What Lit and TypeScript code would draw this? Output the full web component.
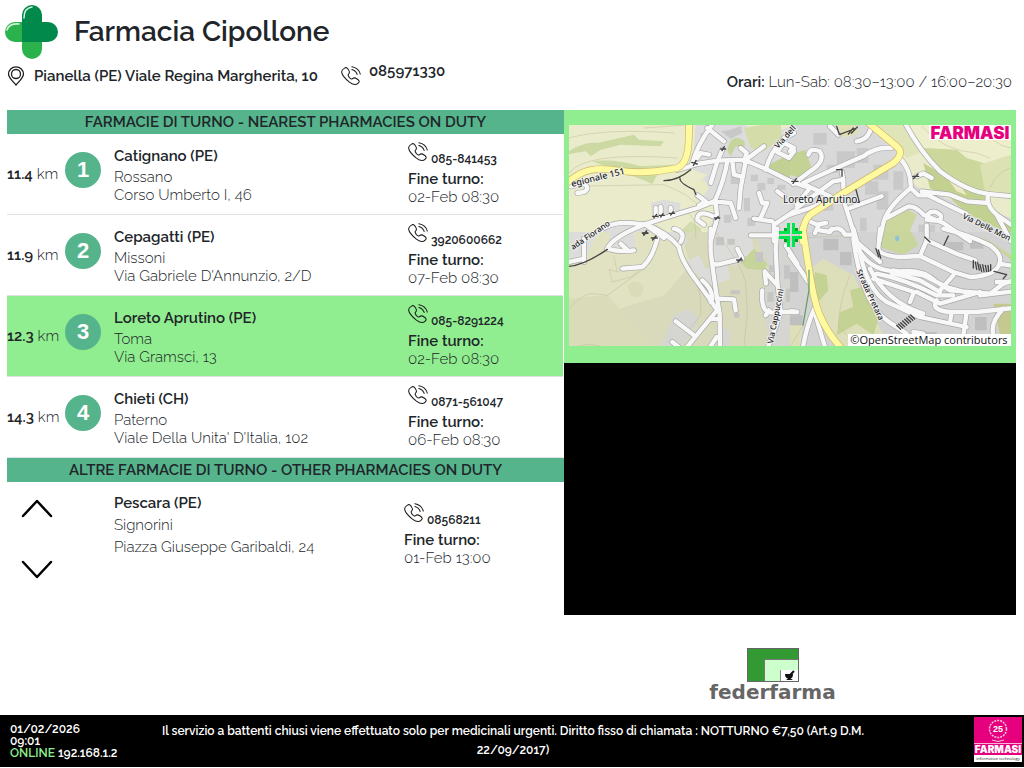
import { LitElement, html, svg, css } from "lit";
import { customElement, property } from "lit/decorators.js";
import { classMap } from "lit/directives/class-map.js";

interface Duty {
  km?: string;
  city: string;
  name: string;
  address: string;
  phone: string;
  until: string;
  selected?: boolean;
}

const NEAREST: Duty[] = [
  { km: "11.4", city: "Catignano (PE)", name: "Rossano", address: "Corso Umberto I, 46", phone: "085-841453", until: "02-Feb 08:30" },
  { km: "11.9", city: "Cepagatti (PE)", name: "Missoni", address: "Via Gabriele D'Annunzio, 2/D", phone: "3920600662", until: "07-Feb 08:30" },
  { km: "12.3", city: "Loreto Aprutino (PE)", name: "Toma", address: "Via Gramsci, 13", phone: "085-8291224", until: "02-Feb 08:30", selected: true },
  { km: "14.3", city: "Chieti (CH)", name: "Paterno", address: "Viale Della Unita' D'Italia, 102", phone: "0871-561047", until: "06-Feb 08:30" },
];

const OTHER: Duty = {
  city: "Pescara (PE)", name: "Signorini", address: "Piazza Giuseppe Garibaldi, 24", phone: "08568211", until: "01-Feb 13:00",
};

const phoneIcon = html`<svg class="phone-icon" viewBox="0 0 57 57" aria-hidden="true">
  <g fill="none" stroke="#1c1c1c" stroke-width="3" stroke-linecap="round" stroke-linejoin="round">
    <path d="M10 6C14 3 18 5 22 12C26 18 25 20 21 24C19 26 20 28 24 33C29 38 31 38 33 36C37 32 40 33 46 37C53 42 53 45 49 49C43 55 36 55 24 46C12 36 3 26 2 18C1 13 5 9 10 6Z"/>
    <path d="M31 2Q50 5 55 23"/><path d="M31 10Q43 13 46 24"/>
  </g></svg>`;

/* Map tiles: each is drawn on a grid three times finer than the map. */
interface Tile { at: string; fields: [string, string][]; roads: string; main: string; dark: string; tracks: string }

const TILES: Tile[] = [
  {
    at: "translate(564 108) scale(.333333)",
    fields: [
      ["#cdd9a3", "M15 130Q60 100 100 105L210 80L225 95L300 100L290 115L170 110L110 125L80 145L65 130L15 138Z"],
      ["#cdd9a3", "M85 160Q150 150 230 175L330 170L345 185L280 200L265 228L235 215L180 195Z"],
      ["#dcdcdc", "M395 50H540L600 90L690 50V400H430L455 290L400 260L395 230L430 200L385 185Z"],
      ["#c8c8c8", "M470 70L500 65L530 55L535 75L500 92Z"],
      ["#c6d59b", "M490 130Q495 90 520 90Q550 95 540 120L515 115L500 145Z"],
      ["#d4dcaa", "M540 60L600 50H650L655 90L600 130L560 120Z"],
      ["#c2d193", "M610 175Q640 150 690 140V215L650 205Z"],
      ["#e8eac5", "M385 225L420 215L435 240L420 262L395 255Z"],
      ["#dcdcda", "M260 285L300 275L350 285L345 315L265 320Z"],
      ["#dddddb", "M150 340L240 350L290 395H60L100 370Z"],
      ["#c9c9c9", "M500 200h25v28h-25zM560 200h22v20h-22zM580 225h24v22h-24zM610 210h20v18h-20zM540 270h18v40h-18zM550 330h24v24h-24zM480 320h22v24h-22zM640 230h25v15h-25zM410 75h18v20h-18z"],
      ["#d3dcae", "M350 370L380 340L410 360L420 395H340Z"],
    ],
    roads: "M340 186L400 168L460 158L540 155L610 185L690 225M385 165Q400 110 445 50M430 60L480 100M400 150L410 135L435 140M440 225L460 160L475 125M490 160Q480 220 450 285M505 160L510 200L530 205M545 160L530 240L525 300M530 120L548 135L540 160L600 115M605 185Q620 130 660 90L690 75M640 130L660 105L690 120M640 132L675 150L690 130M400 262L425 280L405 292M120 360Q160 335 240 350Q330 320 400 300L450 280L500 285L515 330M455 285L460 330L430 318Q400 310 400 335L420 350M460 330L440 400M585 255L595 285L610 285L590 330M570 332L625 340M640 250L660 265M630 400L630 350L690 310M20 235L60 228Q80 240 60 252L40 255M275 300V325M290 297V325M320 300V325M245 350L300 390",
    main: "M10 224C60 180 100 178 165 188C230 198 290 190 340 180C372 165 376 120 375 45",
    dark: "M300 218Q340 218 380 185M348 210Q345 225 390 245L396 260M383 163L400 168M388 172L396 158M470 123L485 123M474 128L481 116M266 325H282M270 329L278 319M286 322H301M290 327L297 317M316 316H332M320 321L328 311M451 330H467M455 335L463 325M236 376H251M240 381L247 371",
    tracks: "M15 90Q120 60 330 75M15 195Q60 130 340 150M15 235L300 230Q380 260 410 300M240 60L380 50M350 310Q400 310 395 390",
  },
  {
    at: "translate(790 108) scale(.333333)",
    fields: [
      ["#d9d9d9", "M0 50H250L330 130L360 220L400 250L663 330V400H0Z"],
      ["#e0e5b9", "M250 50H350L400 130L350 150L320 110Z"],
      ["#edeecb", "M350 50H663V262L560 250L450 180Z"],
      ["#cbd79b", "M400 120L500 125L530 150L580 165V200L590 255L520 240L460 200Z"],
      ["#dde2b4", "M570 170L663 140V260L585 250Z"],
      ["#c3d190", "M400 165L460 200L590 260L610 310L663 345V380L530 315L480 270L420 240Z"],
      ["#eceac6", "M465 200L500 215L530 262L500 250Z"],
      ["#c4d394", "M0 140L45 125L65 180L30 210L0 200Z"],
      ["#e0dfb6", "M140 50H195L210 75L160 90Z"],
      ["#cbd79d", "M280 345L345 300L380 320L360 370L340 395H280Z"],
      ["#c9c9c9", "M70 75h40v35h-40zM140 130h55v50h-55zM200 120h35v45h-35zM250 170h45v45h-45zM225 220h40v40h-40zM310 190h30v55h-30zM260 250h35v55h-35zM90 290h40v18h-40zM110 170h35v25h-35zM385 350h50v40h-50zM210 330h20v40h-20z"],
    ],
    roads: "M345 45Q390 130 450 190Q530 250 595 258L670 265M595 258Q585 290 620 320L670 355M200 100Q235 95 243 60M40 225Q160 170 220 145Q260 115 305 120M0 220L60 240L20 290M45 230L120 265M330 150Q365 190 362 240L385 262L415 262Q470 290 530 318M362 240Q290 300 280 345L268 400M395 250L480 260L530 280L595 285M380 205L400 196L425 210M290 330L355 295Q380 295 400 320L460 345L540 400M410 322Q430 300 452 322Q460 345 410 335M20 300L130 220L160 215L155 190M160 215L160 240M180 300L275 265M165 290L200 400M60 340L80 350L108 345M88 348L75 375M120 368Q150 350 165 380L195 380M55 140Q60 118 90 130Q108 160 60 190L10 228M120 55L145 80M0 130L8 120M620 320L663 400M0 320L60 300L100 285",
    main: "M232 42L320 115Q345 135 310 165L160 255L60 320Q35 345 38 400",
    dark: "M140 55L148 80L200 60M175 78L190 60M184 76L202 57M368 205H386M370 212L384 198M5 220H24M9 226L19 212M140 185H156V205M180 283H208L198 245",
    tracks: "M395 55Q460 130 560 135L600 150M580 50Q600 110 663 120M663 180Q620 190 600 240",
  },
  {
    at: "translate(564 232) scale(.333333)",
    fields: [
      ["#d8dabb", "M15 0H690V345H15Z"],
      ["#e0e2c1", "M15 0H350L380 100L300 190L200 220L15 280Z"],
      ["#d9dbb9", "M190 165Q210 130 240 165Q230 210 200 190ZM15 200L130 190L270 345H15Z"],
      ["#dcdcda", "M15 0H100L60 90L15 95ZM140 0H210L215 45L170 60L130 52ZM240 0H360L370 30L350 45L290 10ZM365 90L405 70L425 110L490 100L500 140L450 160L420 150ZM440 0H560L570 60L520 100L445 95Z"],
      ["#d5d5d2", "M330 250L370 230L405 260L380 310L350 345H290ZM470 280L500 300L495 345H470ZM570 0H690V345H620L590 200L620 120Z"],
      ["#c5d499", "M530 90L570 50L610 95L600 115L550 110Z"],
      ["#c5c5c3", "M455 15h25v25h-25zM490 20h22v18h-22zM500 175h28v12h-28zM510 243h16v14h-16zM660 100h22v40h-22zM665 170h22v40h-22zM610 180h18v30h-18zM575 60h22v30h-22zM615 100h18v20h-18z"],
    ],
    roads: "M130 50Q145 15 240 -22M130 50Q170 62 210 55M170 35L188 52M280 20Q265 80 235 105L175 110M240 -25Q310 0 345 45Q350 85 400 150Q430 190 460 235M330 -10Q368 0 350 30M440 -10L440 60Q455 180 467 245L468 350M415 145Q445 170 445 200L440 210M365 350L455 240M440 260L468 262M335 268L390 310M325 330L350 350M458 315L435 350M445 95L460 98L535 80L520 50M465 200L510 202L515 235M560 10L640 10M640 -10L635 50L640 150L650 240L700 240M640 160L602 118L606 155M595 175Q590 225 610 240L650 243M605 250L615 235M650 240Q630 300 610 350M60 20V90M665 40L700 95M15 90L60 80",
    main: "",
    dark: "M15 103Q60 100 130 52M235 3H252M239 9L248 -4M262 18H280M266 24L276 12M518 84H535M522 90L532 78",
    tracks: "M15 230Q60 180 90 185L130 190L240 110M350 60Q420 150 410 250L370 300M455 0Q530 90 545 150L550 240L540 345M40 345Q70 330 120 345M150 75L160 120L135 112L145 150L200 135L240 105",
  },
  {
    at: "translate(790 232) scale(.333333)",
    fields: [
      ["#d3d3d3", "M0 0H663V345H0Z"],
      ["#dcdfba", "M60 110L100 80L190 130L240 230L300 345H150Q100 300 75 220Z"],
      ["#c4d293", "M75 120L110 130L115 175L80 215L65 180ZM180 175L215 165L270 245L250 310L200 275L140 310L150 240L190 225Z"],
      ["#c9d69b", "M270 0H365L385 40L340 68L270 45Z"],
      ["#c9d69b", "M560 0L663 70V85L600 30Z"],
      ["#c5c98f", "M610 215H663V310H630Z"],
      ["#dedfb9", "M0 280L40 270L30 345H0Z"],
      ["#8cc0de", "M314 18Q322 4 328 18Q326 30 318 27Z"],
      ["#bfbfbf", "M100 20h45v35h-45zM150 60h35v40h-35zM0 120h25v60h-25zM0 250h38v30h-38zM390 300h50v20h-50zM555 255h35v40h-35zM470 30h50v25h-50zM540 20h40v30h-40z"],
    ],
    roads: "M190 -10L210 60Q230 170 290 210L390 255M200 30L270 90M270 -10L265 50Q270 70 330 75L390 72L410 25L500 65L555 85M390 72L490 120L540 135Q620 130 628 95M460 -10Q540 10 600 40Q640 70 628 95L670 102M410 25V-20M205 50Q240 120 330 118Q400 110 440 150L480 175L600 185L640 155L670 145M260 125Q340 140 440 190L490 190M250 140L372 180L360 210M240 110Q290 210 400 245M380 180L450 215L570 180M440 205Q420 235 480 240L560 240L670 228M485 240L480 270M530 240L520 310M390 255L530 285M640 230Q600 270 610 310M570 190L670 178M450 175L490 130M310 115L400 130L470 165L540 185M305 122L390 145L450 180M0 70Q30 110 55 150M75 225Q50 280 38 350M75 245L105 345M190 20Q215 210 290 265L350 305M370 300L400 305M0 238H14M660 150L620 150M90 -5L120 0L125 -10",
    main: "M38 -10L60 130Q75 220 90 250Q110 300 155 350",
    dark: "M475 12L462 40M404 15L420 30M550 85V108M556 90L560 112M563 92L568 114M570 98L575 118M578 98L582 118M586 100L590 119M594 100L596 118M602 98V116M258 50L266 74M265 54L272 78M612 118L650 128L640 140M320 280L332 292M326 276L338 288M332 272L344 284M338 267L350 279M344 262L356 274M350 258L362 270M356 253L368 265M362 249L374 261",
    tracks: "M180 130Q150 200 145 280L170 310M0 345L40 280M0 20L190 10",
  },
];

@customElement("road-map")
export class RoadMap extends LitElement {
  static styles = css`
    :host { display: block; }
    .map { display: block; width: 100%; height: auto; }
    .street { font: 500 8px "Noto Sans", sans-serif; fill: #222; stroke: #f4f4f4; stroke-width: 2px; stroke-opacity: .8; paint-order: stroke; }
    .highway { font-size: 9px; }
    .town { font-size: 10px; font-weight: 400; }
    .credit { font: 11px "Open Sans", sans-serif; fill: #111; }
    .brand { font: 900 17px Inter, sans-serif; fill: #e6007e; }
    .casing { stroke: #a8a8a8; stroke-width: 17; }
    .road { stroke: #f8f8f8; stroke-width: 13; }
    .main-casing { stroke: #cdb76a; stroke-width: 22; }
    .main { stroke: #fff9a0; stroke-width: 18; }
    .dark { stroke: #444; stroke-width: 4; }
    .track { stroke: #c3b795; stroke-width: 2; stroke-opacity: .7; }
  `;

  render() {
    return html`<svg class="map" viewBox="569 125 442 221" role="img" aria-label="Loreto Aprutino">
      <rect x="569" y="125" width="442" height="221" fill="#e9ebca"/>
      ${TILES.map((t) => svg`<g transform=${t.at}>${t.fields.map(([c, d]) => svg`<path fill=${c} d=${d}/>`)}</g>`)}
      <g fill="none" stroke-linecap="round" stroke-linejoin="round">
        ${TILES.map((t) => svg`<path class="track" transform=${t.at} d=${t.tracks}/>`)}
        ${TILES.map((t) => svg`<path class="casing" transform=${t.at} d=${t.roads}/>`)}
        ${TILES.map((t) => svg`<path class="road" transform=${t.at} d=${t.roads}/>`)}
        ${TILES.map((t) => svg`<path class="main-casing" transform=${t.at} d=${t.main}/>`)}
        ${TILES.map((t) => svg`<path class="main" transform=${t.at} d=${t.main}/>`)}
        ${TILES.map((t) => svg`<path class="dark" transform=${t.at} d=${t.dark}/>`)}
        <path d="M809 270V290L803 325" stroke="#5d9a68" stroke-width="1.2"/>
      </g>
      <text class="street highway" transform="translate(572 187) rotate(-14)">egionale 151</text>
      <text class="street" transform="translate(778 149) rotate(-48)">Via dell</text>
      <text class="street" transform="translate(573 250) rotate(-34)">ada Fiorano</text>
      <text class="street" transform="translate(962 218) rotate(26)">Via Delle Mon</text>
      <text class="street" transform="translate(856 271) rotate(65)">Strada Pretara</text>
      <text class="street" transform="translate(773 344) rotate(-79)">Via Cappuccini</text>
      <text class="street town" x="783" y="203">Loreto Aprutino</text>
      <g fill="#00e64d">
        <path d="M779 231h8v-8h3v11h-11zM792 223h3v8h7v3h-10zM779 236h11v11h-3v-8h-8zM792 236h10v3h-7v8h-3z"/>
        <path fill="#0a9b2c" d="M784 228h3v3h-3zM795 228h3v3h-3zM784 239h3v3h-3zM795 239h3v3h-3z"/>
      </g>
      <rect x="929" y="125" width="82" height="15" fill="#fff" fill-opacity=".9"/>
      <text class="brand" x="970" y="139" text-anchor="middle">FARMASI</text>
      <rect x="848" y="334" width="163" height="12" fill="#fff"/>
      <text class="credit" x="929" y="344" text-anchor="middle">©OpenStreetMap contributors</text>
    </svg>`;
  }
}

@customElement("duty-contact")
export class DutyContact extends LitElement {
  @property({ attribute: false }) duty!: Duty;

  static styles = css`
    :host { display: block; }
    .phone { display: flex; gap: 3px; height: 28px; color: inherit; text-decoration: none; font-size: 12px; font-weight: 600; line-height: 34px; }
    .phone-icon { width: 20px; height: 20px; }
    .label, .until { display: block; line-height: 18px; }
    .label { font-weight: 600; }
    .until { font-weight: 300; }
  `;

  render() {
    return html`<a class="phone" href="tel:${this.duty.phone}">${phoneIcon}<span>${this.duty.phone}</span></a>
      <span class="label">Fine turno:</span>
      <time class="until">${this.duty.until}</time>`;
  }
}

@customElement("app-root")
export class AppRoot extends LitElement {
  static styles = css`
    :host { display: block; color: #212529; font: 300 15px/18px Raleway, Lato, sans-serif; }
    * { box-sizing: border-box; }
    h1, h2, h3, p, ol { margin: 0; padding: 0; font: inherit; }
    a { color: inherit; text-decoration: none; }
    .page { display: flex; flex-direction: column; min-height: 100vh; background: #fff; }
    .head { padding: 5px 12px 0 5px; height: 110px; }
    .title { display: flex; align-items: center; gap: 15px; height: 54px; }
    .logo { width: 54px; height: 54px; }
    .title h1 { font-size: 28px; font-weight: 600; line-height: 36px; }
    .info { display: flex; align-items: flex-start; font-weight: 600; padding-top: 3px; }
    .address { display: flex; align-items: center; gap: 8px; padding: 4px 0 0 1px; }
    .pin { width: 20px; height: 20px; }
    .call { display: flex; gap: 8px; padding-left: 23px; }
    .phone-icon { width: 20px; height: 20px; margin-top: 4px; }
    .hours { margin-left: auto; padding-top: 11px; font-weight: 300; }
    b { font-weight: 600; }
    .body { display: grid; grid-template-columns: 557fr 452fr; align-items: start; padding: 0 8px 0 7px; }
    .band { background: #55b48c; text-align: center; font-weight: 600; line-height: 24px; }
    .nearest { list-style: none; padding-right: 1px; }
    .row { display: grid; grid-template-columns: 58px 49px 294px 1fr; height: 81px; border-bottom: 1px solid #dee2e6; }
    .selected { background: #90ee90; }
    .km { padding-top: 31px; }
    .badge { width: 36px; height: 36px; margin-top: 18px; border-radius: 50%; background: #55b48c; color: #fff; text-align: center; font: bold 22px/36px "Liberation Sans", sans-serif; }
    .who { padding-top: 10px; }
    .who h3 { font-weight: 600; line-height: 24px; }
    .contact { padding-top: 8px; }
    .others { display: grid; grid-template-columns: 107px 290px 1fr; }
    .others .who { line-height: 22px; }
    .others .who h3 { line-height: 22px; }
    .others .contact { padding-top: 21px; }
    .arrows { display: flex; flex-direction: column; align-items: flex-start; gap: 40px; padding: 15px 0 0 12px; }
    .arrow { display: block; width: 36px; height: 22px; padding: 0; border: 0; background: none; }
    .arrow svg { display: block; width: 36px; height: 22px; }
    .frame { padding: 15px 5px 17px; background: #90ee90; }
    .video { aspect-ratio: 452 / 252; background: #000; }
    .feder { display: flex; flex-direction: column; align-items: center; padding: 33px 35px 0 0; font: bold 20px/20px "DejaVu Sans", sans-serif; color: #666; }
    .feder svg { width: 52px; height: 34px; }
    .foot { display: grid; grid-template-columns: 150px 1fr 150px; height: 52px; margin: auto 0 1px; background: #000; color: #fff; font-size: 12px; font-weight: 600; }
    .status { padding: 8px 0 0 10px; line-height: 12px; }
    .online { color: #90ee90; }
    .notice { text-align: center; line-height: 19px; padding: 7px 0 0 2px; }
    .maker { justify-self: end; margin: 2px 2px 0 0; width: 48px; height: 45px; }
    .maker-year { font: bold 9px "Liberation Sans", sans-serif; fill: #fff; }
    .maker-name { font: 900 10px Inter, sans-serif; fill: #fff; }
    .maker-tag { font: 4px "Open Sans", sans-serif; fill: #222; }
  `;

  private row(d: Duty, i: number) {
    return html`<li class=${classMap({ row: true, selected: !!d.selected })}>
      <p class="km"><b>${d.km}</b> km</p>
      <div class="badge">${i + 1}</div>
      <div class="who"><h3>${d.city}</h3><p>${d.name}</p><p>${d.address}</p></div>
      <duty-contact class="contact" .duty=${d}></duty-contact>
    </li>`;
  }

  render() {
    return html`<div class="page">
      <header class="head">
        <div class="title">
          <svg class="logo" viewBox="0 0 54 54" aria-hidden="true">
            <rect x="0" y="17" width="40" height="20" rx="10" fill="#2bb24c"/>
            <rect x="17" y="14" width="20" height="40" rx="10" fill="#2bb24c"/>
            <path fill="#00894a" d="M17 37V10A10 10 0 0 1 37 10V17H43A10 10 0 0 1 43 37Z"/>
            <path d="M19 13Q19 3 27 2M2 25Q4 18 14 19" fill="none" stroke="#d6f0dc" stroke-width="1.5" stroke-linecap="round"/>
          </svg>
          <h1>Farmacia Cipollone</h1>
        </div>
        <div class="info">
          <p class="address">
            <svg class="pin" viewBox="0 0 20 20" fill="none" stroke="#1c1c1c" stroke-width="1.3" aria-hidden="true">
              <path d="M10 19C6 14.500 2.500 11.500 2.500 8A7.500 7.200 0 0 1 17.500 8C17.500 11.500 14 14.500 10 19Z"/><circle cx="10" cy="8" r="4.500"/>
            </svg>Pianella (PE) Viale Regina Margherita, 10</p>
          <a class="call" href="tel:085971330">${phoneIcon}<span>085971330</span></a>
          <p class="hours"><b>Orari:</b> Lun-Sab: 08:30–13:00 / 16:00–20:30</p>
        </div>
      </header>
      <main class="body">
        <section>
          <h2 class="band">FARMACIE DI TURNO - NEAREST PHARMACIES ON DUTY</h2>
          <ol class="nearest">${NEAREST.map((d, i) => this.row(d, i))}</ol>
          <h2 class="band">ALTRE FARMACIE DI TURNO - OTHER PHARMACIES ON DUTY</h2>
          <div class="others">
            <div class="arrows">
              <button class="arrow" type="button" aria-label="Precedente"><svg viewBox="0 0 36 22"><path d="M4 19L18 4L32 19" fill="none" stroke="#000" stroke-width="2.500" stroke-linecap="round" stroke-linejoin="round"/></svg></button>
              <button class="arrow" type="button" aria-label="Successivo"><svg viewBox="0 0 36 22"><path d="M4 3L18 18L32 3" fill="none" stroke="#000" stroke-width="2.500" stroke-linecap="round" stroke-linejoin="round"/></svg></button>
            </div>
            <div class="who"><h3>${OTHER.city}</h3><p>${OTHER.name}</p><p>${OTHER.address}</p></div>
            <duty-contact class="contact" .duty=${OTHER}></duty-contact>
          </div>
        </section>
        <aside>
          <div class="frame"><road-map></road-map></div>
          <div class="video"></div>
          <div class="feder">
            <svg viewBox="0 0 52 34" aria-hidden="true">
              <rect x=".5" y=".5" width="51" height="33" fill="#339933" stroke="#666"/>
              <path d="M18 33V12H51V33Z" fill="#ccffcc"/><path d="M17.500 33V11.500H51" fill="none" stroke="#777"/>
              <path d="M34 22H51V33H34Z" fill="#fff"/><path d="M33.500 33V22" stroke="#888"/>
              <path d="M38 26H46Q46 30 43.500 30.500L46 32H39L41 30.500Q38 30 38 26Z" fill="#111"/><path d="M43 27L47 23" stroke="#111" stroke-width="2"/>
            </svg>
            federfarma
          </div>
        </aside>
      </main>
      <footer class="foot">
        <div class="status"><p>01/02/2026</p><p>09:01</p><p><span class="online">ONLINE</span> 192.168.1.2</p></div>
        <p class="notice">Il servizio a battenti chiusi viene effettuato solo per medicinali urgenti. Diritto fisso di chiamata : NOTTURNO €7,50 (Art.9 D.M. 22/09/2017)</p>
        <svg class="maker" viewBox="0 0 48 45" aria-label="FARMASI information technology">
          <rect width="48" height="45" fill="#e6007e"/>
          <circle cx="24" cy="12" r="8.500" fill="none" stroke="#f9c6e0" stroke-width="1.500" stroke-dasharray="2 1"/>
          <path d="M18 23Q24 26 30 23" fill="none" stroke="#f9c6e0"/>
          <text class="maker-year" x="24" y="15" text-anchor="middle">25</text>
          <path d="M0 26.500H48" stroke="#fff" stroke-width=".7"/>
          <text class="maker-name" x="24" y="36" text-anchor="middle">FARMASI</text>
          <rect y="38" width="48" height="7" fill="#fff"/>
          <text class="maker-tag" x="24" y="43" text-anchor="middle">information technology</text>
        </svg>
      </footer>
    </div>`;
  }
}
